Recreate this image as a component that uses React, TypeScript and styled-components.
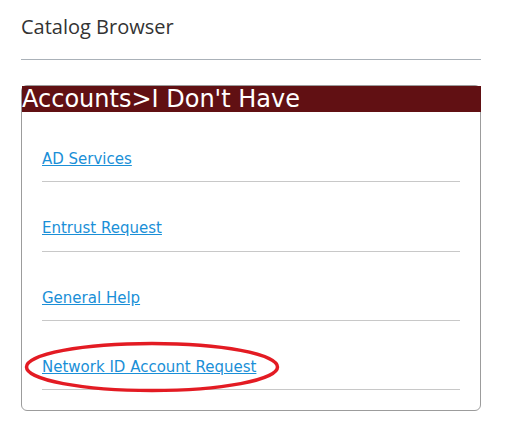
import styled, { createGlobalStyle } from 'styled-components';

const GlobalStyle = createGlobalStyle`
  body {
    margin: 0;
    background: #fff;
  }
`;

const Page = styled.main`
  position: relative;
  width: 460px;
  padding: 0 0 20px 21px;
`;

const Title = styled.h1`
  margin: 0;
  padding-top: 13px;
  font-family: 'Open Sans', 'Noto Sans', sans-serif;
  font-size: 20px;
  line-height: 28px;
  font-weight: 400;
  color: #333;
`;

const Divider = styled.hr`
  margin: 18px 0 25px;
  border: 0;
  border-top: 1px solid #aab1b8;
`;

const Panel = styled.section`
  border: 1px solid #9c9c9c;
  border-radius: 6px;
  background: #fff;
`;

const PanelHeader = styled.h2`
  margin: 0 -1px 0 0;
  background: #611013;
  color: #fff;
  font-family: 'DejaVu Sans', Verdana, sans-serif;
  font-size: 24px;
  line-height: 26px;
  font-weight: 400;
  white-space: nowrap;
`;

const LinkList = styled.ul`
  list-style: none;
  margin: 0;
  padding: 1px 20px 20px;
`;

const LinkItem = styled.li`
  padding: 36px 0 12.33px;
  border-bottom: 1px solid #c8c8c8;
  line-height: 20px;
`;

const CatalogLink = styled.a`
  font-family: 'DejaVu Sans', Verdana, sans-serif;
  font-size: 15px;
  color: #1a8fd7;
  text-decoration: underline;
`;

const Highlight = styled.svg`
  position: absolute;
  left: 24px;
  top: 341px;
  pointer-events: none;
`;

const links = ['AD Services', 'Entrust Request', 'General Help', 'Network ID Account Request'];

export default function App() {
  return (
    <>
      <GlobalStyle />
      <Page>
        <Title>Catalog Browser</Title>
        <Divider />
        <Panel>
          <PanelHeader>Accounts&gt;I Don't Have</PanelHeader>
          <LinkList>
            {links.map((label) => (
              <LinkItem key={label}>
                <CatalogLink href="#">{label}</CatalogLink>
              </LinkItem>
            ))}
          </LinkList>
        </Panel>
        <Highlight width="258" height="53" viewBox="0 0 258 53">
          <ellipse cx="128" cy="26" rx="125.5" ry="23.5" fill="none" stroke="#e31b23" strokeWidth="3.5" />
        </Highlight>
      </Page>
    </>
  );
}
